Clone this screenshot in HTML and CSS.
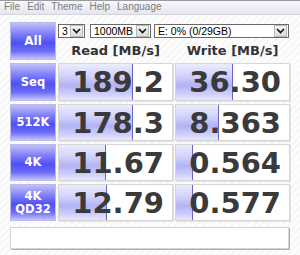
FILE: index.html
```html
<html>
  <head>
    <link rel="stylesheet" href="styles.css">
  </head>
  <body>
    <div class="menu">
      <span>File</span>
      <span>Edit</span>
      <span>Theme</span>
      <span>Help</span>
      <span>Language</span>
    </div>
    <div class="main">
      <div class="board">
        <div class="btn">All</div>
        <div class="head">
          <div class="controls">
            <div class="select count">
              <span>3</span>
              <i class="arrow"><svg width="9" height="6" viewBox="0 0 9 6"><path d="M1 1 L4.5 4.5 L8 1" fill="none" stroke="#111" stroke-width="1.6"/></svg></i>
            </div>
            <div class="select size">
              <span>1000MB</span>
              <i class="arrow"><svg width="9" height="6" viewBox="0 0 9 6"><path d="M1 1 L4.5 4.5 L8 1" fill="none" stroke="#111" stroke-width="1.6"/></svg></i>
            </div>
            <div class="select drive">
              <span>E: 0% (0/29GB)</span>
              <i class="arrow"><svg width="9" height="6" viewBox="0 0 9 6"><path d="M1 1 L4.5 4.5 L8 1" fill="none" stroke="#111" stroke-width="1.6"/></svg></i>
            </div>
          </div>
          <div class="titles">
            <span>Read [MB/s]</span>
            <span>Write [MB/s]</span>
          </div>
        </div>

        <div class="btn small">Seq</div>
        <div class="cell"><div class="bar" style="width: 74px"></div><span class="val">189.2</span></div>
        <div class="cell"><div class="bar" style="width: 57px"></div><span class="val">36.30</span></div>

        <div class="btn small">512K</div>
        <div class="cell"><div class="bar" style="width: 74px"></div><span class="val">178.3</span></div>
        <div class="cell"><div class="bar" style="width: 43px"></div><span class="val">8.363</span></div>

        <div class="btn small">4K</div>
        <div class="cell"><div class="bar" style="width: 47px"></div><span class="val">11.67</span></div>
        <div class="cell"><div class="bar" style="width: 17px"></div><span class="val">0.564</span></div>

        <div class="btn small">4K<br>QD32</div>
        <div class="cell"><div class="bar" style="width: 48px"></div><span class="val">12.79</span></div>
        <div class="cell"><div class="bar" style="width: 17px"></div><span class="val">0.577</span></div>
      </div>
      <div class="status"></div>
    </div>
  </body>
</html>
```

FILE: styles.css
```css
body {
  margin: 0;
  width: 300px;
  height: 255px;
  overflow: hidden;
  font-family: "DejaVu Sans", sans-serif;
  background: repeating-linear-gradient(-45deg, #fdfdfd 0 3px, #f6f6f6 3px 5px);
}
.menu {
  display: flex;
  gap: 7px;
  height: 13px;
  padding-left: 4px;
  border-top: 1px solid #9a9aa0;
  border-bottom: 1px solid #d4d4dc;
  background: linear-gradient(#f6f6fb, #e6e6f0);
  font-family: "Liberation Sans", sans-serif;
  font-size: 10px;
  line-height: 12px;
  color: #7c7c7c;
}
.main {
  padding: 7px 0 0 10px;
}
.board {
  display: grid;
  grid-template-columns: 46px 115px 115px;
  grid-template-rows: 38px 38px 37px 37px 37px;
  column-gap: 2px;
  row-gap: 3px;
}
.btn {
  display: flex;
  align-items: center;
  justify-content: center;
  text-align: center;
  box-sizing: border-box;
  border: 1px solid #bcbce8;
  background: linear-gradient(#c0c0fc 0%, #8484f8 28%, #5050f4 55%, #6c6cf6 78%, #c4c4fd 100%);
  color: #fff;
  font-weight: bold;
  font-size: 12px;
  line-height: 13px;
}
.btn.small {
  font-size: 11.5px;
}
.head {
  grid-column: 2 / 4;
  display: flex;
  flex-direction: column;
}
.controls {
  display: flex;
  margin-top: 2px;
  height: 14px;
  font-family: "Liberation Sans", sans-serif;
  font-size: 10.5px;
}
.select {
  display: flex;
  align-items: center;
  justify-content: space-between;
  box-sizing: border-box;
  height: 14px;
  border: 1px solid #6a6a6a;
  background: #fff;
  padding-left: 3px;
  color: #000;
}
.count { width: 27px; }
.size { width: 61px; margin-left: 5px; }
.drive { width: 135px; margin-left: 3px; }
.arrow {
  display: flex;
  align-items: center;
  justify-content: center;
  width: 11px;
  height: 10px;
  margin-right: 1px;
  border: 1px solid #b8b8b8;
  background: linear-gradient(#f4f4f4, #dcdcdc);
}
.titles {
  display: grid;
  grid-template-columns: 115px 115px;
  column-gap: 2px;
  margin-top: 3px;
  font-size: 13px;
  font-weight: bold;
  line-height: 20px;
  color: #333;
  text-align: center;
}
.cell {
  display: grid;
  box-sizing: border-box;
  border: 1px solid #d6d6d6;
  box-shadow: 1px 1px 0 #e2e2e2;
  background: #fff;
}
.bar {
  grid-area: 1 / 1;
  justify-self: start;
  height: 100%;
  box-sizing: border-box;
  border-right: 1px solid #6868c4;
  background: linear-gradient(#ececff 0%, #d0d0fc 35%, #b2b2f4 60%, #d0d0fd 85%, #e8e8ff 100%);
}
.val {
  grid-area: 1 / 1;
  align-self: center;
  justify-self: end;
  padding-right: 8px;
  font-size: 29px;
  font-weight: bold;
  line-height: 30px;
  color: #3a3a3a;
}
.status {
  width: 279px;
  height: 22px;
  margin-top: 6px;
  box-sizing: border-box;
  border: 1px solid #d4d4d4;
  box-shadow: 1px 1px 0 #b0b0b0;
  background: #fff;
}
```
